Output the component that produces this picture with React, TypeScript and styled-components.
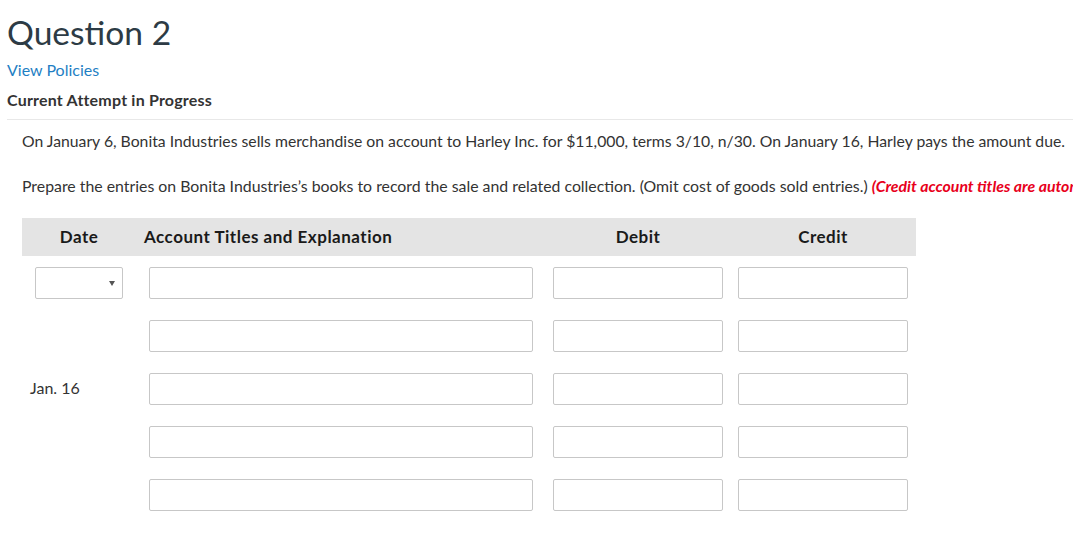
import React from "react";
import styled, { createGlobalStyle } from "styled-components";

const GlobalStyle = createGlobalStyle`
  html, body {
    margin: 0;
    padding: 0;
    background: #ffffff;
    overflow: hidden;
  }
  body {
    font-family: Lato, "Open Sans", Arial, sans-serif;
    color: #333333;
  }
`;

const Page = styled.div`
  width: 1073px;
  height: 546px;
  overflow: hidden;
  padding: 0 0 0 7px;
  box-sizing: border-box;
`;

const Title = styled.h1`
  margin: 0;
  padding-top: 13px;
  font-family: Lato, sans-serif;
  font-weight: 400;
  font-size: 33.6px;
  line-height: 38px;
  color: #2d3b45;
`;

const PolicyLink = styled.a`
  display: block;
  margin-top: 9px;
  font-size: 16px;
  line-height: 20px;
  color: #1f7fc4;
  text-decoration: none;
  cursor: pointer;
`;

const AttemptLabel = styled.div`
  margin-top: 10px;
  font-size: 16px;
  letter-spacing: 0.2px;
  line-height: 20px;
  font-weight: 700;
  color: #333333;
  padding-bottom: 9px;
  border-bottom: 1px solid #e8e8e8;
`;

const Content = styled.div`
  padding-left: 15px;
`;

const Paragraph = styled.p<{ $top: number; $size: number }>`
  margin: 0;
  font-size: ${(p) => p.$size}px;
  line-height: 20px;
  color: #333333;
  white-space: nowrap;
  padding-top: ${(p) => p.$top}px;
`;

const Warning = styled.span`
  color: #e8001b;
  font-weight: 700;
  font-style: italic;
`;

const Table = styled.div`
  margin: 22px 0 0 15px;
  width: 894px;
`;

const HeaderRow = styled.div`
  display: grid;
  grid-template-columns: 114px 407px 188px 185px;
  height: 38px;
  background: #e4e4e4;
  align-items: center;
  font-weight: 700;
  font-size: 17px;
  letter-spacing: 0.5px;
  color: #1a1a1a;
  padding-bottom: 1px;
  box-sizing: border-box;
`;

const HeadCell = styled.div<{ $align: "center" | "left"; $pad: number; $w?: number }>`
  text-align: ${(p) => p.$align};
  padding-left: ${(p) => p.$pad}px;
  width: ${(p) => (p.$w ? `${p.$w}px` : "auto")};
`;

const BodyRow = styled.div`
  display: grid;
  grid-template-columns: 114px 407px 188px 185px;
  align-items: center;
  height: 53px;
  &:first-of-type {
    margin-top: 10px;
  }
`;

const DateCell = styled.div`
  padding-left: 8px;
  padding-bottom: 2px;
  font-size: 16px;
  color: #333333;
`;

const Field = styled.div<{ $left: number; $w: number }>`
  margin-left: ${(p) => p.$left}px;
  width: ${(p) => p.$w}px;
  height: 32px;
  box-sizing: border-box;
  border: 1px solid #c7c7c7;
  border-radius: 2px;
  background: #ffffff;
`;

const SelectBox = styled.div`
  position: relative;
  margin-left: 13px;
  width: 88px;
  height: 32px;
  box-sizing: border-box;
  border: 1px solid #c7c7c7;
  border-radius: 2px;
  background: #ffffff;
`;

const Arrow = styled.span`
  position: absolute;
  right: 7px;
  top: 13px;
  width: 0;
  height: 0;
  border-left: 3px solid transparent;
  border-right: 3px solid transparent;
  border-top: 5px solid #555555;
`;

type RowDef = { date: "select" | "text" | "none"; label?: string };

const rows: RowDef[] = [
  { date: "select" },
  { date: "none" },
  { date: "text", label: "Jan. 16" },
  { date: "none" },
  { date: "none" },
];

export default function App() {
  return (
    <>
      <GlobalStyle />
      <Page>
        <Title>Question 2</Title>
        <PolicyLink>View Policies</PolicyLink>
        <AttemptLabel>Current Attempt in Progress</AttemptLabel>
        <Content>
          <Paragraph $top={11} $size={15.75}>
            On January 6, Bonita Industries sells merchandise on account to Harley Inc. for $11,000, terms 3/10, n/30. On
            January 16, Harley pays the amount due.
          </Paragraph>
          <Paragraph $top={25} $size={15.85}>
            Prepare the entries on Bonita Industries’s books to record the sale and related collection. (Omit cost of goods
            sold entries.){" "}
            <Warning>
              (Credit account titles are automatically indented when amount is entered. Do not indent manually.)
            </Warning>
          </Paragraph>
        </Content>
        <Table>
          <HeaderRow>
            <HeadCell $align="center" $pad={0}>
              Date
            </HeadCell>
            <HeadCell $align="left" $pad={8}>
              Account Titles and Explanation
            </HeadCell>
            <HeadCell $align="center" $pad={10} $w={170}>
              Debit
            </HeadCell>
            <HeadCell $align="center" $pad={7} $w={170}>
              Credit
            </HeadCell>
          </HeaderRow>
          {rows.map((r, i) => (
            <BodyRow key={i}>
              {r.date === "select" ? (
                <SelectBox>
                  <Arrow />
                </SelectBox>
              ) : (
                <DateCell>{r.label ?? ""}</DateCell>
              )}
              <Field $left={13} $w={384} />
              <Field $left={10} $w={170} />
              <Field $left={7} $w={170} />
            </BodyRow>
          ))}
        </Table>
      </Page>
    </>
  );
}
